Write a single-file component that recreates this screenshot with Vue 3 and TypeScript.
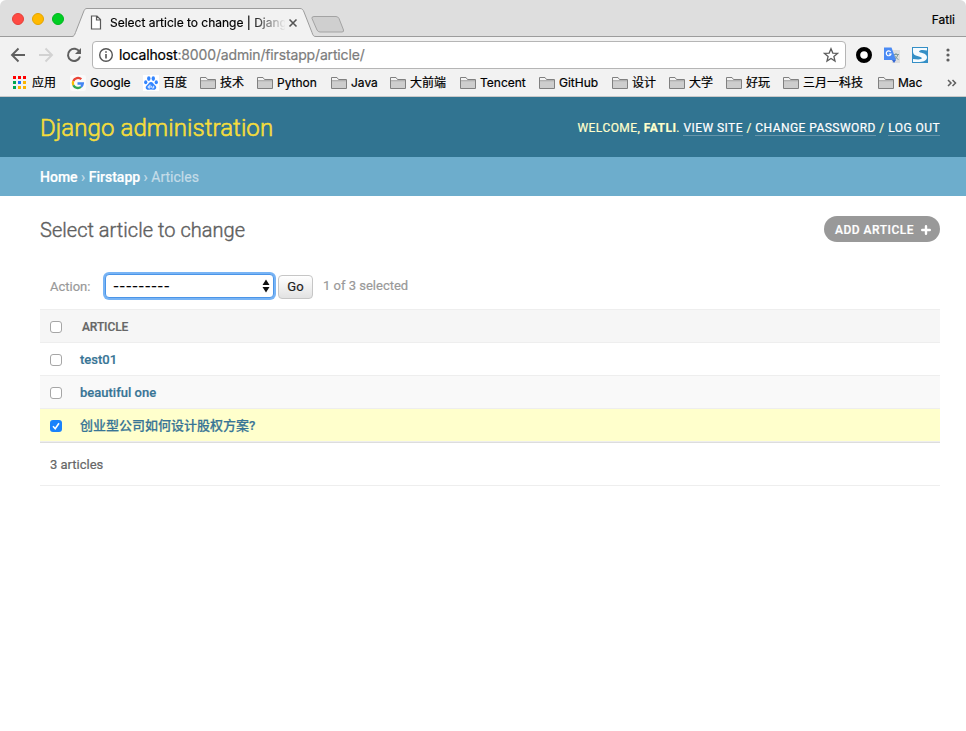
<script setup lang="ts">
import { ref, computed } from 'vue'

interface Bookmark {
  label: string
  icon: 'apps' | 'google' | 'baidu' | 'folder'
  width: number
}

interface Article {
  id: number
  title: string
  checked: boolean
}

const bookmarks: Bookmark[] = [
  { label: '应用', icon: 'apps', width: 58 },
  { label: 'Google', icon: 'google', width: 73 },
  { label: '百度', icon: 'baidu', width: 57 },
  { label: '技术', icon: 'folder', width: 57 },
  { label: 'Python', icon: 'folder', width: 74 },
  { label: 'Java', icon: 'folder', width: 59 },
  { label: '大前端', icon: 'folder', width: 70 },
  { label: 'Tencent', icon: 'folder', width: 79 },
  { label: 'GitHub', icon: 'folder', width: 73 },
  { label: '设计', icon: 'folder', width: 57 },
  { label: '大学', icon: 'folder', width: 57 },
  { label: '好玩', icon: 'folder', width: 57 },
  { label: '三月一科技', icon: 'folder', width: 95 },
  { label: 'Mac', icon: 'folder', width: 60 },
]

const appDots = ['#f00', '#f00', '#f00', '#00a651', '#1a73ff', '#fbb400', '#00a651', '#fbb400', '#fbb400']

const articles = ref<Article[]>([
  { id: 1, title: 'test01', checked: false },
  { id: 2, title: 'beautiful one', checked: false },
  { id: 3, title: '创业型公司如何设计股权方案?', checked: true },
])

const selectedCount = computed(() => articles.value.filter((a) => a.checked).length)
</script>

<template>
  <div class="window">
    <div class="tabstrip">
      <div class="lights">
        <span class="light red"></span>
        <span class="light yellow"></span>
        <span class="light green"></span>
      </div>
      <div class="tab">
        <svg class="tab-shape" width="246" height="29" viewBox="0 0 246 29">
          <path d="M0 29V28.500H1C3 28.500 3.500 27 4.500 24.500L12.500 4C13.500 1.500 14 .5 16 .5H229C231 .5 232 1.500 233 4L241 24.500C242 27.500 242.500 28.500 245 28.500H246V29Z" fill="#f2f2f2" />
          <path d="M0 28.500H1C3 28.500 3.500 27 4.500 24.500L12.500 4C13.500 1.500 14 .5 16 .5H229C231 .5 232 1.500 233 4L241 24.500C242 27.500 242.500 28.500 245 28.500H246" fill="none" stroke="#9c9c9c" />
        </svg>
        <svg class="page-icon" width="12" height="15" viewBox="0 0 12 15">
          <path d="M1.500 1H7L10.500 4.500V14H1.500ZM6.500 1V5H10.500" fill="#fff" stroke="#5a5a5a" stroke-width="1.200" />
        </svg>
        <span class="tab-title">Select article to change | Djang</span>
        <svg class="close" width="10" height="10" viewBox="0 0 10 10">
          <path d="M1.500 1.500L8.500 8.500M8.500 1.500L1.500 8.500" stroke="#555" stroke-width="1.600" />
        </svg>
      </div>
      <svg class="new-tab" width="34" height="18" viewBox="0 0 34 18">
        <path d="M3 .5H25Q27 .5 28 2.500L32.500 14Q33 16 31 16H9Q7 16 6 14L1 2.500Q.5 .5 3 .5Z" fill="#cfcfcf" stroke="#a3a3a3" />
      </svg>
      <span class="profile">Fatli</span>
    </div>

    <div class="toolbar">
      <svg class="nav back" width="16" height="16" viewBox="0 0 16 16">
        <path d="M15 8H2M8.500 1.500L2 8L8.500 14.500" fill="none" stroke="#5f5f5f" stroke-width="1.900" />
      </svg>
      <svg class="nav forward" width="16" height="16" viewBox="0 0 16 16">
        <path d="M1 8H14M7.500 1.500L14 8L7.500 14.500" fill="none" stroke="#d2d2d2" stroke-width="1.900" />
      </svg>
      <svg class="nav reload" width="16" height="16" viewBox="0 0 16 16">
        <path d="M13.500 5A6.100 6.100 0 1 0 14 9.500" fill="none" stroke="#5f5f5f" stroke-width="2" />
        <path d="M15 1V7H9Z" fill="#5f5f5f" />
      </svg>
      <div class="omnibox">
        <svg width="16" height="16" viewBox="0 0 16 16">
          <circle cx="8" cy="8" r="6.300" fill="none" stroke="#555" stroke-width="1.400" />
          <path d="M8 7V11.600M8 4.200V5.800" stroke="#555" stroke-width="1.600" />
        </svg>
        <span class="url"><b>localhost</b>:8000/admin/firstapp/article/</span>
        <svg class="star" width="16" height="16" viewBox="0 0 16 16">
          <path d="M8 1.700L9.800 6.100L14.500 6.400L10.900 9.400L12 14L8 11.500L4 14L5.100 9.400L1.500 6.400L6.200 6.100Z" fill="none" stroke="#5c5c5c" stroke-width="1.300" />
        </svg>
      </div>
      <div class="extensions">
        <svg width="16" height="16" viewBox="0 0 16 16">
          <circle cx="8" cy="8" r="5.900" fill="#fff" stroke="#000" stroke-width="4.200" />
        </svg>
        <svg width="16" height="16" viewBox="0 0 16 16">
          <path d="M6 3H16V16H8Z" fill="#dedede" />
          <path d="M9 7.500H15M12 6V7.500M14 7.500Q13 11 10 13M10.500 8.500Q12 11.500 14.500 12.500" stroke="#7f9b9d" fill="none" />
          <path d="M0 .5H7.500L12 13H0Z" fill="#4a8af4" />
          <path d="M8 13H12L10 16Z" fill="#3367d6" />
          <path d="M6.700 5A2.400 2.400 0 1 0 7 7H4.900" fill="none" stroke="#fff" stroke-width="1.200" />
        </svg>
        <svg width="16" height="16" viewBox="0 0 16 16">
          <rect width="16" height="16" fill="#348fc6" />
          <path d="M1 1H15V3.500C11 2.500 7 2.800 7 4.600C7 6.300 15 5.800 15 10.300C15 14 11 15 6 15H1V12C6 12.800 9.800 12.700 9.800 11.100C9.800 9.200 1 9.600 1 5Z" fill="#f5fbff" />
        </svg>
        <svg width="16" height="16" viewBox="0 0 16 16">
          <g fill="#5f5f5f"><circle cx="8" cy="3" r="1.600" /><circle cx="8" cy="8" r="1.600" /><circle cx="8" cy="13" r="1.600" /></g>
        </svg>
      </div>
    </div>

    <div class="bookmarks">
      <div v-for="b in bookmarks" :key="b.label" class="bookmark" :style="{ width: b.width + 'px' }">
        <svg v-if="b.icon === 'apps'" width="16" height="16" viewBox="0 0 16 16">
          <rect v-for="(c, i) in appDots" :key="i" :x="1 + (i % 3) * 5" :y="1 + Math.floor(i / 3) * 5" width="3" height="3" :fill="c" />
        </svg>
        <svg v-else-if="b.icon === 'google'" width="16" height="16" viewBox="0 0 16 16">
          <rect width="16" height="16" rx="2" fill="#fafafa" />
          <g fill="none" stroke-width="2.300">
            <path d="M11.300 4.200A5 5 0 0 0 3.300 6" stroke="#ea4335" />
            <path d="M3.300 6A5 5 0 0 0 3.300 10.200" stroke="#fbbc05" />
            <path d="M3.300 10.200A5 5 0 0 0 11 11.800" stroke="#34a853" />
            <path d="M11 11.800A5 5 0 0 0 12.800 8.500H7.500" stroke="#4285f4" />
          </g>
        </svg>
        <svg v-else-if="b.icon === 'baidu'" width="16" height="16" viewBox="0 0 16 16">
          <rect width="16" height="16" fill="#fff" />
          <g fill="#3385ff">
            <ellipse cx="5.800" cy="3.600" rx="1.700" ry="2.300" />
            <ellipse cx="10.300" cy="3.600" rx="1.700" ry="2.300" />
            <ellipse cx="2.700" cy="7.200" rx="1.600" ry="2" />
            <ellipse cx="13.300" cy="7.300" rx="1.600" ry="2" />
            <path d="M8 7C10 7 10.500 9 12 10.200C14.500 12.300 13 15 10.500 14.700Q8 14.300 5.500 14.700C3 15 1.500 12.300 4 10.200C5.500 9 6 7 8 7Z" />
          </g>
          <path d="M7 9.500V13H5.500Q4.500 12 5.500 11H7M8.700 10.800V12.200Q8.700 13 9.500 13H10.700V10.800" fill="none" stroke="#fff" stroke-width=".9" />
        </svg>
        <svg v-else width="16" height="16" viewBox="0 0 16 16">
          <path d="M.5 13.500V2.500H6L7.500 4.500H15.500V13.500Z" fill="#f4f4f4" stroke="#808080" />
          <rect x="1" y="6" width="14" height="7" fill="#cdcdcd" />
          <path d="M1 5.700H15" stroke="#8c8c8c" stroke-width=".8" />
        </svg>
        <span>{{ b.label }}</span>
      </div>
      <svg class="more" width="10" height="10" viewBox="0 0 10 10">
        <path d="M1 2L4 5L1 8M5.500 2L8.500 5L5.500 8" fill="none" stroke="#5f5f5f" stroke-width="1.500" />
      </svg>
    </div>

    <header class="site-header">
      <h1>Django administration</h1>
      <div class="user-tools">
        Welcome, <strong>Fatli</strong>. <a>View site</a> / <a>Change password</a> / <a>Log out</a>
      </div>
    </header>
    <nav class="breadcrumbs"><a>Home</a> › <a>Firstapp</a> › Articles</nav>

    <main>
      <div class="heading">
        <h2>Select article to change</h2>
        <a class="add">
          <span>Add article</span>
          <svg width="10" height="10" viewBox="0 0 10 10"><path d="M5 1.200V8.800M1.200 5H8.800" stroke="#fff" stroke-width="2.400" stroke-linecap="round" /></svg>
        </a>
      </div>
      <div class="actions">
        <span class="action-label">Action:</span>
        <div class="select">
          <span>---------</span>
          <svg width="8" height="14" viewBox="0 0 8 14"><path d="M4 .5L7.500 6H.5ZM.5 8H7.500L4 13.500Z" fill="#111" /></svg>
        </div>
        <button class="go" type="button">Go</button>
        <span class="counter">{{ selectedCount }} of {{ articles.length }} selected</span>
      </div>
      <div class="row head"><span class="box"></span><span class="cell">Article</span></div>
      <div v-for="(a, i) in articles" :key="a.id" class="row" :class="{ even: i % 2 === 1, selected: a.checked }">
        <span class="box" :class="{ checked: a.checked }" @click="a.checked = !a.checked">
          <svg v-if="a.checked" width="12" height="12" viewBox="0 0 12 12"><path d="M3 6.300L5.200 8.700L9 3.200" fill="none" stroke="#fff" stroke-width="1.600" /></svg>
        </span>
        <a class="cell">{{ a.title }}</a>
      </div>
      <div class="paginator">{{ articles.length }} articles</div>
    </main>
  </div>
</template>

<style>
body {
  margin: 0;
  background: #fff;
}
</style>

<style scoped>
.window {
  width: 966px;
  height: 731px;
  overflow: hidden;
  box-sizing: border-box;
  background: #fff;
  font-family: Roboto, "Noto Sans CJK SC", sans-serif;
  font-size: 13px;
  color: #666;
  -webkit-text-stroke: 0.2px;
}
svg { display: block; flex: none; }
.tabstrip, .toolbar, .bookmarks {
  display: flex;
  box-sizing: border-box;
  font-family: Inter, "Noto Sans CJK SC", sans-serif;
  color: #000;
}
.tabstrip {
  height: 37px;
  background: #dedede;
  border-bottom: 1px solid #9c9c9c;
  border-radius: 6px 6px 0 0;
  padding: 0 11px 0 12px;
}
.lights { display: flex; gap: 8px; padding-top: 13px; width: 59px; flex: none; }
.light { width: 12px; height: 12px; border-radius: 50%; box-sizing: border-box; }
.red { background: #ff4a43; border: 1px solid #e4403a; }
.yellow { background: #ffb900; border: 1px solid #e3a500; }
.green { background: #00ce23; border: 1px solid #00b61e; }
.tab {
  position: relative;
  display: flex;
  align-items: center;
  height: 29px;
  width: 246px;
  flex: none;
  margin-top: 8px;
  box-sizing: border-box;
  padding-left: 19px;
}
.tab-shape { position: absolute; left: 0; top: 0; }
.page-icon, .tab-title, .close { position: relative; }
.tab-title {
  width: 175px;
  margin-left: 8px;
  white-space: nowrap;
  font-size: 12px;
  letter-spacing: -0.01px;
  -webkit-mask-image: linear-gradient(90deg, #000 140px, transparent 176px);
  mask-image: linear-gradient(90deg, #000 140px, transparent 176px);
}
.close { margin-left: 3px; }
.new-tab { margin: 16px 0 0 -6px; }
.profile { margin-left: auto; padding-top: 12px; font-size: 12px; line-height: 15px; }
.toolbar {
  height: 35px;
  background: #f2f2f2;
  padding: 4px 10px 0;
}
.nav { margin-top: 6px; }
.forward { margin-left: 12px; }
.reload { margin-left: 12px; }
.omnibox {
  display: flex;
  align-items: center;
  width: 754px;
  height: 28px;
  box-sizing: border-box;
  margin-left: 10px;
  padding: 0 6px 0 5px;
  background: #fff;
  border: 1px solid #b5b5b5;
  border-radius: 4px;
}
.url {
  margin-left: 5px;
  padding-bottom: 2px;
  font-size: 14px;
  letter-spacing: -0.15px;
  color: #7c7c7c;
  white-space: nowrap;
}
.url b { font-weight: 400; color: #000; }
.star { margin-left: auto; }
.extensions { display: flex; gap: 12px; margin: 6px 0 0 10px; }
.bookmarks {
  height: 25px;
  background: #f2f2f2;
  border-bottom: 1px solid #c9c9c9;
  padding: 3px 8px 0 12px;
}
.bookmark {
  display: flex;
  align-items: center;
  gap: 4px;
  height: 16px;
  flex: none;
  font-size: 12px;
  line-height: 16px;
  white-space: nowrap;
}
.more { margin: 3px 0 0 9px; }
.site-header {
  display: flex;
  align-items: center;
  justify-content: space-between;
  height: 60px;
  padding: 0 26px 0 40px;
  background: #317491;
}
.site-header h1 {
  margin: 0;
  padding-top: 2px;
  font-size: 24px;
  font-weight: 300;
  letter-spacing: 0.08px;
  color: #f5dd3c;
  line-height: 30px;
  -webkit-text-stroke: 0.6px;
}
.user-tools {
  color: #ffc;
  font-size: 12px;
  line-height: 16px;
  letter-spacing: 0.45px;
  text-transform: uppercase;
  white-space: nowrap;
  padding-top: 2px;
}
.user-tools a { color: #fff; border-bottom: 1px solid #6795ab; }
.breadcrumbs {
  box-sizing: border-box;
  height: 39px;
  padding: 1px 40px 0;
  line-height: 39px;
  font-size: 14px;
  color: #c4dce8;
  background: #6dadcc;
}
.breadcrumbs a { color: #fff; font-weight: 500; }
main { padding: 20px 26px 0 40px; }
.heading { display: flex; justify-content: space-between; height: 26px; }
.heading h2 {
  margin: 0;
  font-size: 20px;
  line-height: 28px;
  font-weight: 300;
  letter-spacing: 0.03px;
  color: #606060;
  -webkit-text-stroke: 0.4px;
}
.add {
  display: flex;
  align-items: center;
  gap: 7px;
  height: 26px;
  width: 116px;
  box-sizing: border-box;
  padding: 1px 8px 0 11px;
  border-radius: 13px;
  background: #999;
  color: #fff;
  font-size: 12px;
  font-weight: 500;
  letter-spacing: 0.5px;
  text-transform: uppercase;
  white-space: nowrap;
}
.actions { display: flex; height: 67px; box-sizing: border-box; padding: 32px 0 0 10px; color: #999; }
.action-label { width: 55px; line-height: 25px; }
.select {
  display: flex;
  align-items: center;
  justify-content: space-between;
  width: 169px;
  height: 24px;
  box-sizing: border-box;
  border: 1px solid #4b95e8;
  border-radius: 4px;
  box-shadow: 0 0 0 2px #78b4f5;
  padding: 0 3px 0 7px;
  color: #000;
  background: #fff;
  font-family: Inter, sans-serif;
  font-size: 13px;
}
.select span { letter-spacing: 0.35px; }
.go {
  width: 35px;
  height: 24px;
  box-sizing: border-box;
  margin: 1px 0 0 4px;
  padding: 0 0 1px;
  border: 1px solid #c6c6c6;
  border-radius: 4px;
  background: linear-gradient(#fff, #e2e2e2);
  font-family: inherit;
  font-size: 13px;
  color: #222;
}
.counter { margin-left: 10px; line-height: 23px; }
.row {
  display: flex;
  align-items: center;
  height: 33px;
  box-sizing: border-box;
  padding-left: 10px;
  border-bottom: 1px solid #eee;
}
.head {
  height: 34px;
  border-top: 1px solid #eee;
  background: #f6f6f6;
}
.box {
  width: 12px;
  height: 12px;
  box-sizing: border-box;
  margin-top: 2px;
  border: 1px solid #a6a6a6;
  border-radius: 3px;
  background: #fff;
}
.checked { border: 0; background: #1a82fb; }
.cell { margin-left: 18px; font-weight: 500; color: #387596; }
.head .cell { margin-left: 20px; padding-top: 2px; font-size: 12px; letter-spacing: -0.1px; color: #666; text-transform: uppercase; }
.even { background: #f9f9f9; }
.selected { background: #ffc; }
.selected .cell { padding-bottom: 2px; }
.paginator { height: 44px; box-sizing: border-box; border-top: 1px solid #ddd; border-bottom: 1px solid #eee; line-height: 43px; padding-left: 10px; }
</style>
